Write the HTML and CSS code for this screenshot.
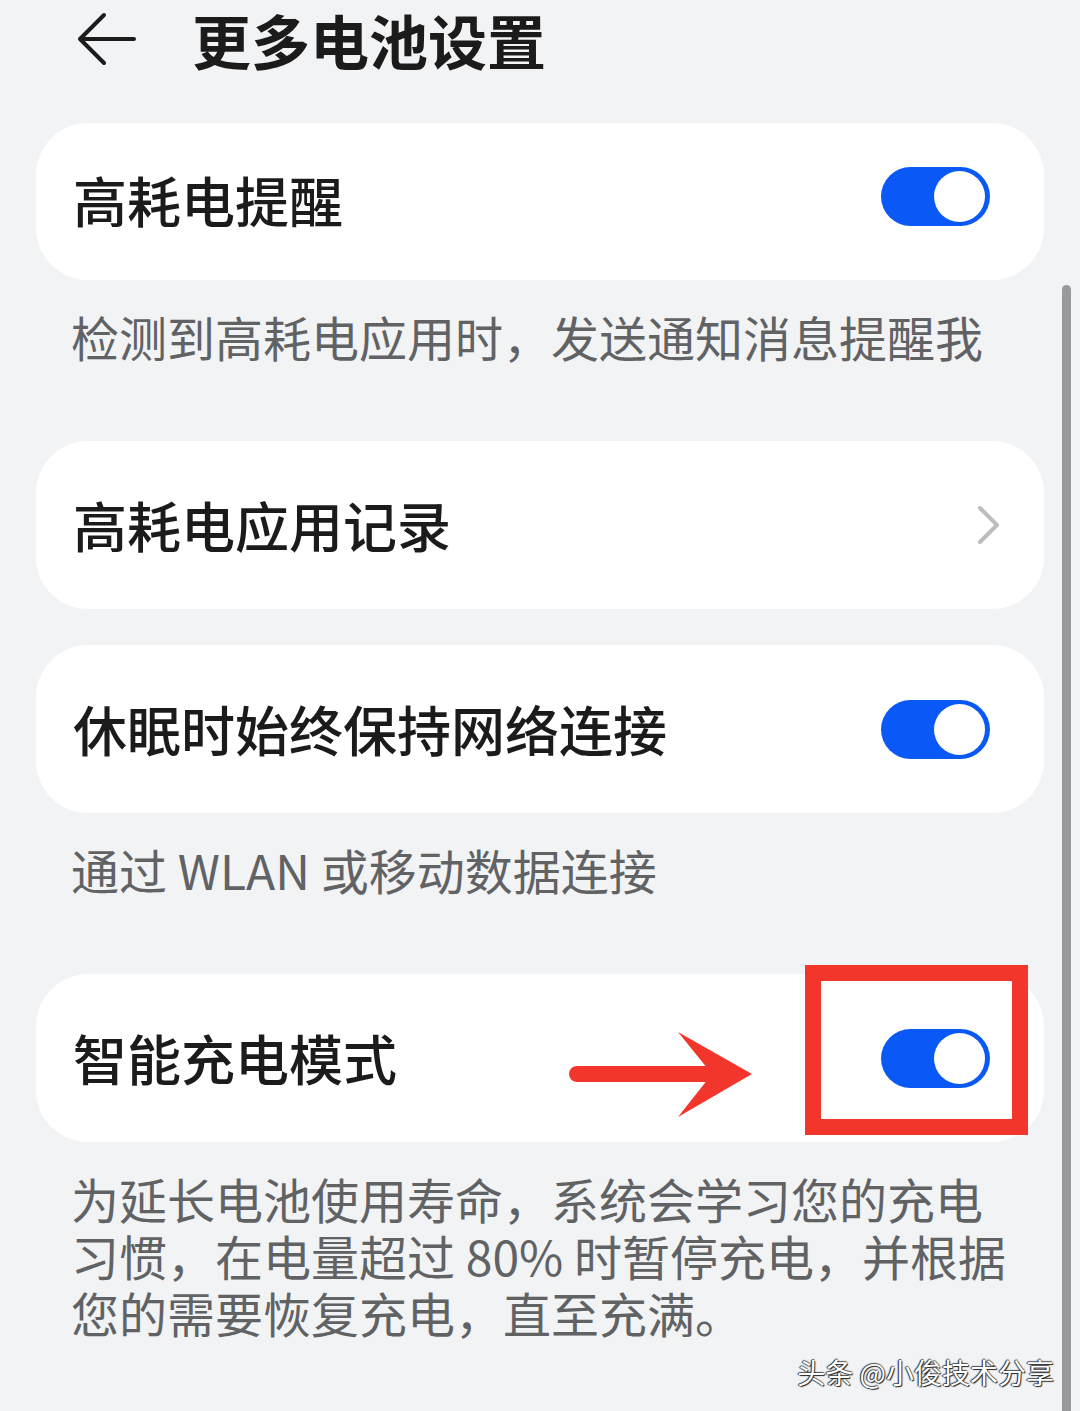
FILE: index.html
```html
<!DOCTYPE html>
<html lang="zh-CN">
<head>
  <meta charset="UTF-8" />
  <meta name="viewport" content="width=device-width, initial-scale=1.0" />
  <link rel="stylesheet" href="styles.css">
</head>
<body>
  <div class="page">
    <div class="topbar">
      <svg class="back-icon" width="60" height="54" viewBox="0 0 60 54">
        <path d="M58 27 H4 M28 3 L4 27 L28 51" fill="none" stroke="#1b1b1b" stroke-width="4" stroke-linecap="round" stroke-linejoin="round" />
      </svg>
      <div class="title">更多电池设置</div>
    </div>

    <div class="card card-first">
      <div class="card-label">高耗电提醒</div>
      <div class="switch"><span class="knob"></span></div>
    </div>
    <div class="desc desc-gap">检测到高耗电应用时，发送通知消息提醒我</div>

    <div class="card">
      <div class="card-label">高耗电应用记录</div>
      <svg class="chevron" width="24" height="40" viewBox="0 0 24 40">
        <path d="M3 3 L20 20 L3 37" fill="none" stroke="#bcbdbf" stroke-width="4" stroke-linecap="round" stroke-linejoin="round" />
      </svg>
    </div>

    <div class="card card-next">
      <div class="card-label">休眠时始终保持网络连接</div>
      <div class="switch"><span class="knob"></span></div>
    </div>
    <div class="desc desc-gap">通过 WLAN 或移动数据连接</div>

    <div class="card card-mark">
      <div class="card-label">智能充电模式</div>
      <div class="switch"><span class="knob"></span></div>

      <!-- red annotation drawn over the row -->
      <svg class="mark-arrow" width="190" height="92" viewBox="0 0 190 92">
        <path d="M8 45 H150" stroke="#f3362c" stroke-width="16" stroke-linecap="round" />
        <path d="M109 3 L183 45 L109 88 L143 45 Z" fill="#f3362c" />
      </svg>
      <div class="mark-box"></div>
    </div>
    <div class="desc">为延长电池使用寿命，系统会学习您的充电习惯，在电量超过 80% 时暂停充电，并根据您的需要恢复充电，直至充满。</div>
  </div>

  <div class="scrollbar"></div>
  <div class="watermark">头条 @小俊技术分享</div>
</body>
</html>
```

FILE: styles.css
```css
body {
  background-color: #f1f3f5;
  font-family: 'Noto Sans CJK SC', 'Noto Sans', sans-serif;
  color: #1b1b1b;
  margin: 0;
  height: 1411px;
  overflow: hidden;
  position: relative;
}

.page {
  padding: 0 36px;
}

.topbar {
  height: 78px;
  display: flex;
  align-items: center;
}

.back-icon {
  margin-left: 40px;
  margin-right: 56px;
}

.title {
  font-size: 59px;
  font-weight: 700;
  line-height: 1;
  color: #1b1b1b;
}

.card {
  background-color: #ffffff;
  border-radius: 52px;
  height: 168px;
  display: flex;
  align-items: center;
  justify-content: space-between;
  padding: 0 43px 0 37px;
  box-sizing: border-box;
  position: relative;
}

.card-first {
  margin-top: 45px;
  height: 157px;
}

.card-first .switch {
  margin-bottom: 10px;
}

.card-first .card-label {
  margin-bottom: 4px;
}

.card-next {
  margin-top: 36px;
}

.card-label {
  font-size: 54px;
  font-weight: 500;
  line-height: 1;
  color: #1b1b1b;
}

.switch {
  width: 109px;
  height: 59px;
  border-radius: 30px;
  background-color: #0a59f7;
  position: relative;
  margin-right: 11px;
}

.knob {
  position: absolute;
  right: 5px;
  top: 4px;
  width: 51px;
  height: 51px;
  border-radius: 50%;
  background-color: #ffffff;
}

.chevron {
  display: block;
}

.desc {
  padding: 28px 24px 0 35px;
  font-size: 48px;
  line-height: 57px;
  color: #616264;
}

.desc-gap {
  padding-bottom: 76px;
}

.mark-arrow {
  position: absolute;
  left: 533px;
  top: 55px;
}

.mark-box {
  position: absolute;
  left: 769px;
  top: -9px;
  width: 223px;
  height: 170px;
  border: 16px solid #f3362c;
  box-sizing: border-box;
}

.scrollbar {
  position: absolute;
  left: 1062px;
  top: 285px;
  bottom: 0;
  width: 9px;
  border-radius: 5px 5px 0 0;
  background-color: #999a9c;
}

.watermark {
  position: absolute;
  right: 26px;
  top: 1352px;
  font-size: 28px;
  line-height: 40px;
  color: #ffffff;
  text-shadow: 1px 1px 1px #222, -1px 0 1px #222, 0 -1px 1px #555;
}
```
